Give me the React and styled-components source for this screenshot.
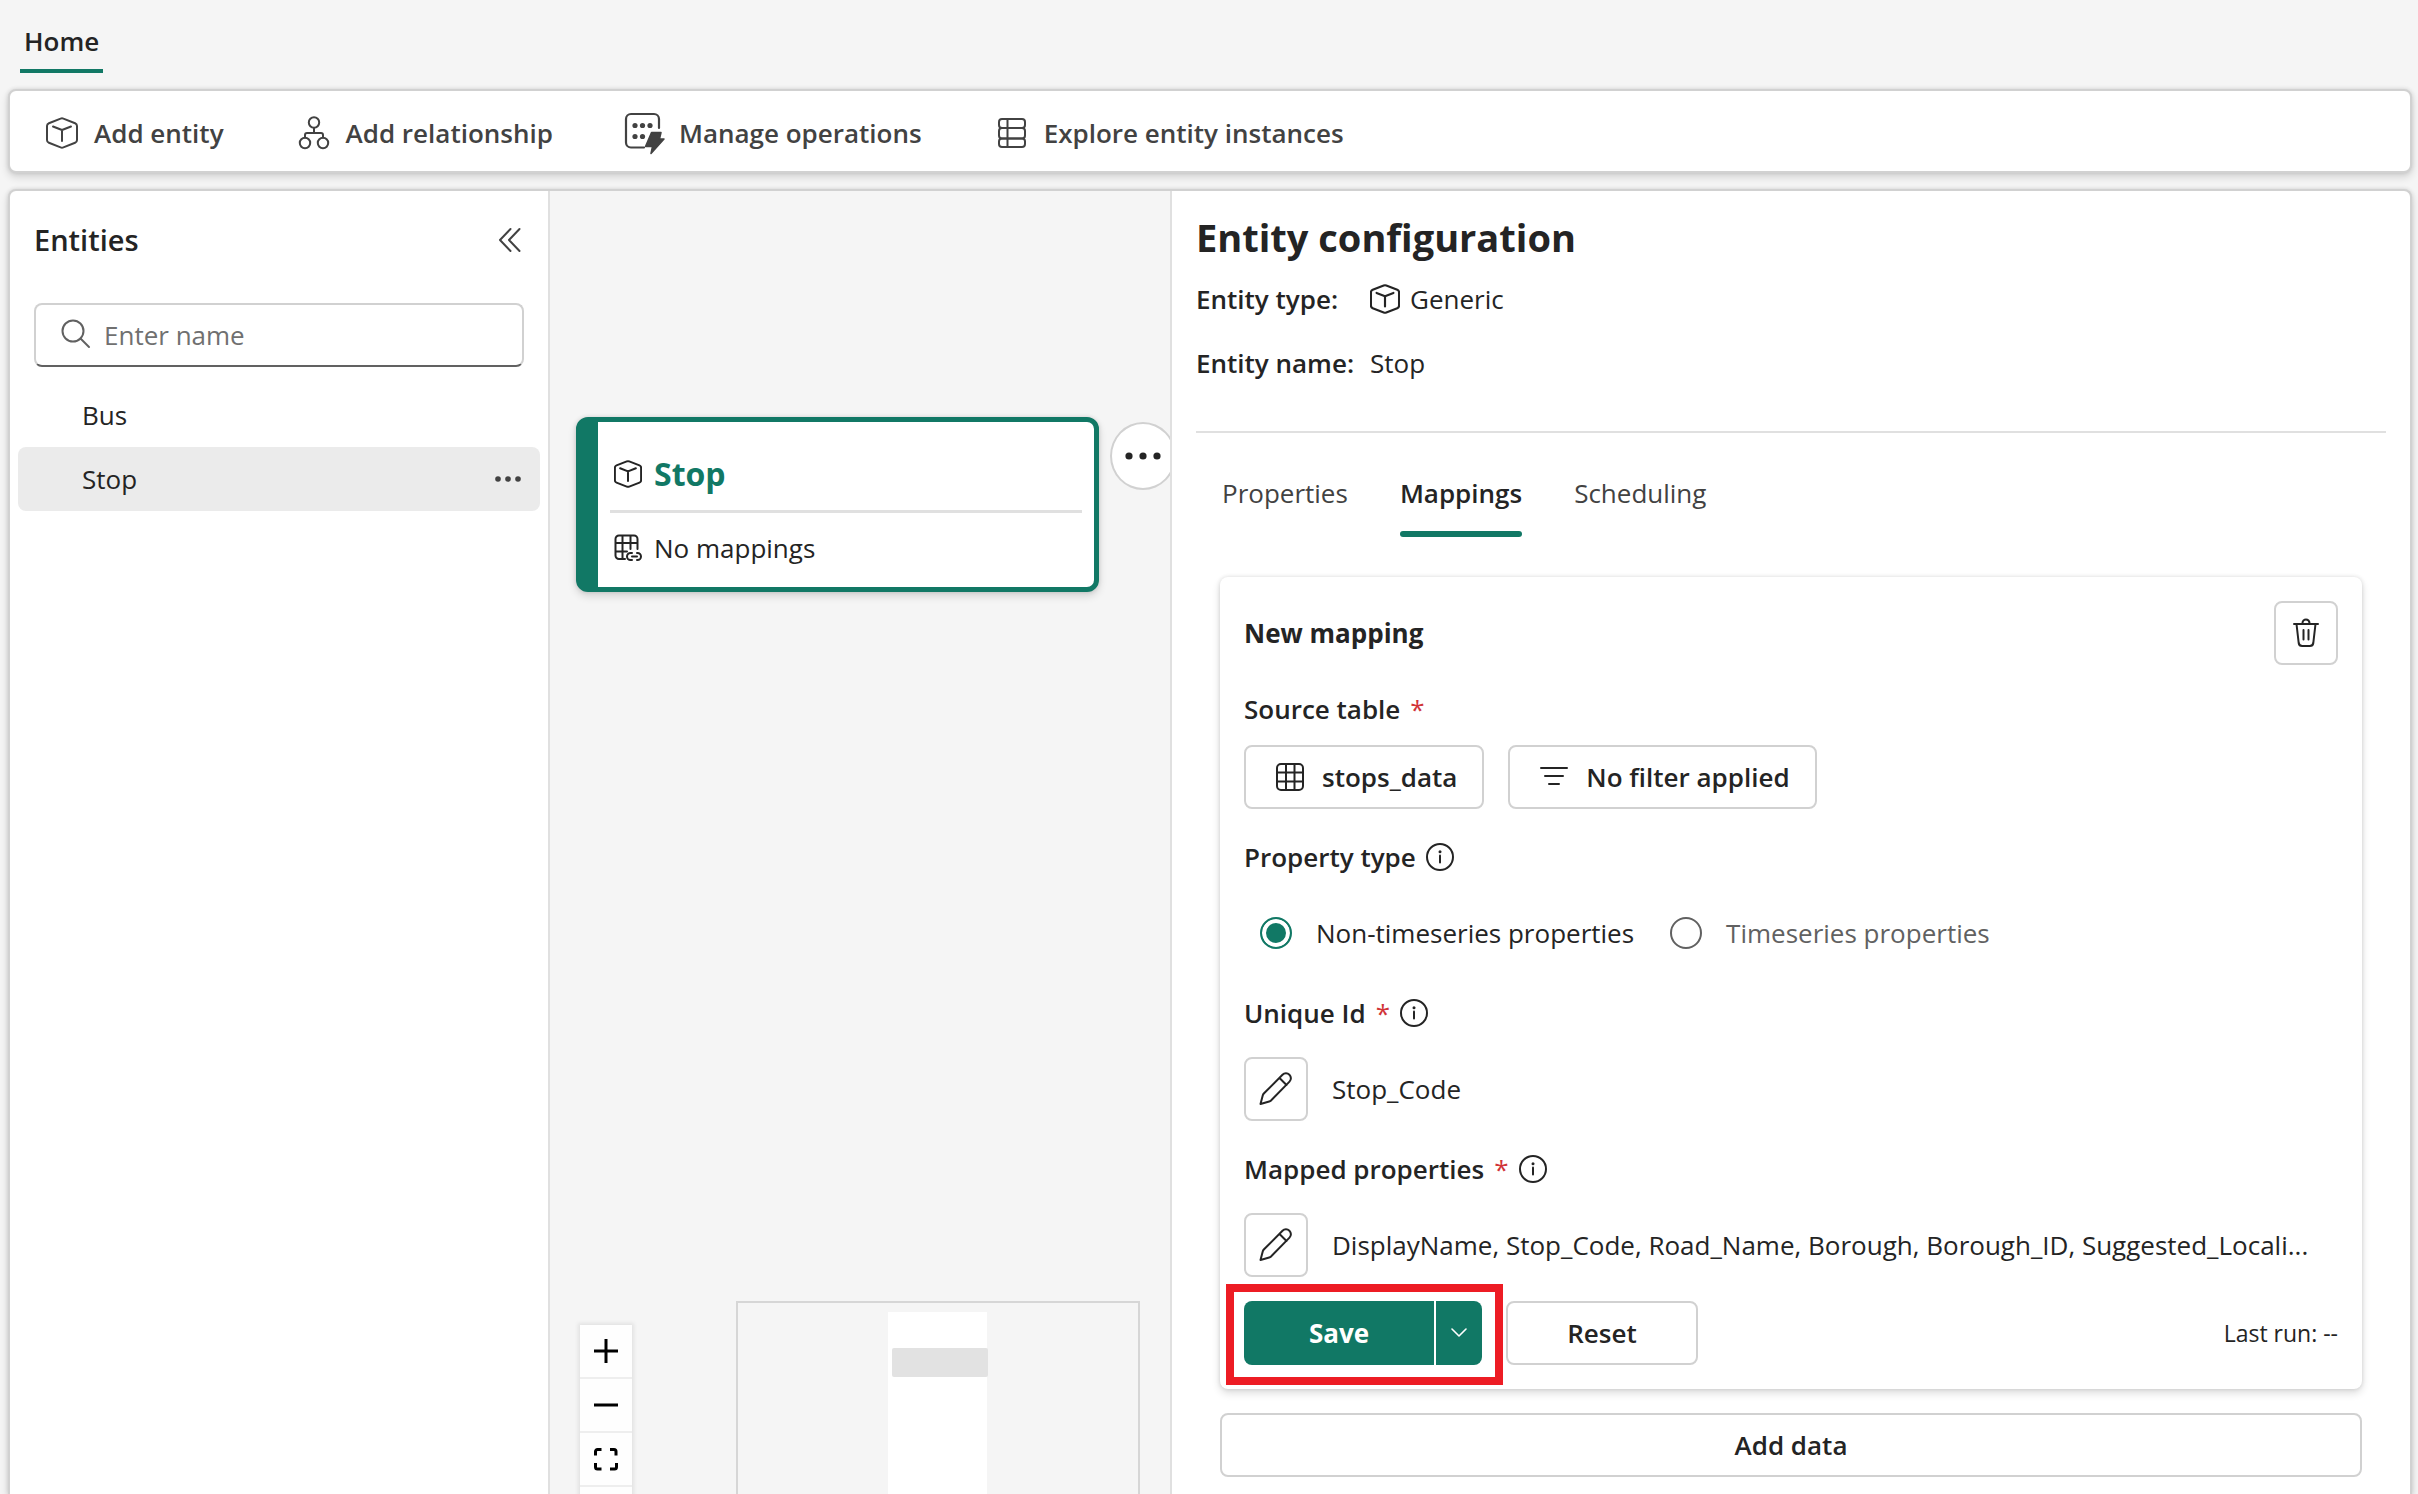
import React, { useState } from "react";
import styled, { createGlobalStyle } from "styled-components";

const GlobalStyle = createGlobalStyle`
  * {
    box-sizing: border-box;
  }

  body {
    margin: 0;
    background-color: #f5f5f5;
    color: #242424;
    font-family: "Open Sans", "Noto Sans", sans-serif;
    font-size: 26px;
    line-height: 40px;
  }

  button,
  input {
    font: inherit;
    color: inherit;
  }
`;

const Page = styled.div`
  height: 100vh;
  display: flex;
  flex-direction: column;
  padding: 0 6px 0 8px;
  overflow: hidden;
`;

const MenuBar = styled.nav`
  display: flex;
  padding: 12px 12px 16px;
`;

const MenuTab = styled.button`
  height: 61px;
  padding: 0 4px;
  border: none;
  background: none;
  font-weight: 600;
  border-bottom: 4px solid #117865;
  cursor: pointer;
`;

const Toolbar = styled.div`
  display: flex;
  align-items: center;
  flex-shrink: 0;
  gap: 70px;
  height: 84px;
  padding: 4px 32px 0;
  margin-bottom: 16px;
  background-color: #fff;
  border: 2px solid #d1d1d1;
  border-radius: 8px;
  box-shadow: 0 4px 8px rgba(0, 0, 0, 0.14), 0 0 4px rgba(0, 0, 0, 0.12);
`;

const ToolbarButton = styled.button`
  display: flex;
  align-items: center;
  gap: 12px;
  padding: 0;
  border: none;
  background: none;
  color: #424242;
  font-weight: 600;
  white-space: nowrap;
  cursor: pointer;
`;

const Workspace = styled.main`
  flex: 1;
  min-height: 0;
  display: grid;
  grid-template-columns: 540px minmax(0, 1fr) minmax(0, 2fr);
  background-color: #fff;
  border: 2px solid #d1d1d1;
  border-bottom: none;
  border-radius: 8px 8px 0 0;
  box-shadow: 0 4px 8px rgba(0, 0, 0, 0.14), 0 0 4px rgba(0, 0, 0, 0.12);
`;

const Sidebar = styled.aside`
  border-right: 2px solid #e0e0e0;
`;

const SidebarHeader = styled.div`
  display: flex;
  justify-content: space-between;
  align-items: center;
  height: 98px;
  padding: 0 24px;
`;

const SidebarTitle = styled.h2`
  margin: 0;
  font-size: 29px;
  font-weight: 600;
`;

const IconButton = styled.button`
  display: flex;
  align-items: center;
  padding: 0;
  border: none;
  background: none;
  color: #424242;
  cursor: pointer;
`;

const SearchBox = styled.label`
  display: flex;
  align-items: center;
  gap: 12px;
  height: 64px;
  margin: 14px 24px 16px;
  padding: 0 24px;
  color: #616161;
  border: 2px solid #d1d1d1;
  border-bottom-color: #616161;
  border-radius: 8px;
`;

const SearchInput = styled.input`
  flex: 1;
  min-width: 0;
  padding: 0;
  border: none;
  outline: none;
  background: none;

  &::placeholder {
    color: #707070;
    opacity: 1;
  }
`;

const EntityList = styled.ul`
  margin: 0;
  padding: 0 8px;
  list-style: none;
`;

const EntityRow = styled.li`
  display: flex;
  align-items: center;
  height: 64px;
  padding-right: 12px;
  border-radius: 8px;
  background-color: ${({ $selected }) => ($selected ? "#ebebeb" : "transparent")};
`;

const EntityButton = styled.button`
  flex: 1;
  height: 100%;
  padding: 0 64px;
  border: none;
  background: none;
  text-align: left;
  cursor: pointer;
`;

const Canvas = styled.section`
  position: relative;
  overflow: hidden;
  background-color: #f5f5f5;
`;

const EntityNode = styled.div`
  position: absolute;
  top: 226px;
  left: 26px;
  width: 523px;
  height: 175px;
  padding: 16px 12px;
  background-color: #fff;
  border: 5px solid #117865;
  border-left-width: 22px;
  border-radius: 12px;
  box-shadow: 0 4px 8px rgba(0, 0, 0, 0.14), 0 0 4px rgba(0, 0, 0, 0.12);
`;

const NodeRow = styled.div`
  display: flex;
  align-items: center;
  gap: 12px;
  height: 72px;
  padding-left: 4px;

  & + & {
    border-top: 3px solid #e0e0e0;
  }
`;

const NodeName = styled.strong`
  color: #117865;
  font-size: 32px;
  font-weight: 700;
`;

const NodeMenuButton = styled.button`
  position: absolute;
  top: 231px;
  left: 560px;
  width: 66px;
  height: 68px;
  display: flex;
  align-items: center;
  justify-content: center;
  padding: 0;
  background-color: #fff;
  border: 2px solid #d1d1d1;
  border-radius: 50%;
  cursor: pointer;
`;

const ZoomControls = styled.div`
  position: absolute;
  left: 30px;
  bottom: -47px;
  width: 52px;
  box-shadow: 0 0 4px 2px rgba(0, 0, 0, 0.08);
`;

const ZoomButton = styled.button`
  display: flex;
  align-items: center;
  justify-content: center;
  width: 52px;
  height: 54px;
  padding: 0;
  color: #000;
  background-color: #fefefe;
  border: none;
  border-bottom: 2px solid #eee;
  cursor: pointer;
`;

const MiniMap = styled.div`
  position: absolute;
  right: 30px;
  bottom: -47px;
  width: 404px;
  height: 240px;
  padding-top: 9px;
  border: 2px solid #d6d6d6;
`;

const MiniMapView = styled.div`
  width: 99px;
  height: 100%;
  margin-left: 150px;
  padding: 36px 0 0 4px;
  background-color: #fff;
`;

const MiniMapNode = styled.div`
  width: 96px;
  height: 29px;
  background-color: #e2e2e2;
  border-radius: 2px;
`;

const ConfigPanel = styled.section`
  padding: 16px 24px 0;
  border-left: 2px solid #e0e0e0;
  overflow: hidden;
`;

const ConfigTitle = styled.h1`
  margin: 0;
  font-size: 38px;
  font-weight: 700;
  line-height: 60px;
`;

const Details = styled.dl`
  display: grid;
  grid-template-columns: 174px 1fr;
  grid-auto-rows: 64px;
  align-items: center;
  margin: 0;
  padding-bottom: 36px;
  border-bottom: 2px solid #e0e0e0;
`;

const DetailLabel = styled.dt`
  font-weight: 600;
`;

const DetailValue = styled.dd`
  display: flex;
  align-items: center;
  gap: 10px;
  margin: 0;
`;

const TabList = styled.div`
  display: flex;
  gap: 52px;
  padding: 20px 26px 40px;
`;

const Tab = styled.button`
  position: relative;
  height: 84px;
  padding: 0 0 4px;
  border: none;
  background: none;
  color: ${({ $active }) => ($active ? "#242424" : "#424242")};
  font-weight: ${({ $active }) => ($active ? 600 : 400)};
  cursor: pointer;

  &::after {
    content: "";
    position: absolute;
    left: 0;
    right: 0;
    bottom: 0;
    height: 6px;
    border-radius: 3px;
    background-color: ${({ $active }) => ($active ? "#117865" : "transparent")};
  }
`;

const MappingSection = styled.div`
  display: flex;
  flex-direction: column;
  gap: 24px;
  padding: 0 24px;
`;

const MappingCard = styled.form`
  padding: 24px;
  background-color: #fff;
  border-radius: 8px;
  box-shadow: 0 4px 8px rgba(0, 0, 0, 0.14), 0 0 4px rgba(0, 0, 0, 0.12);
`;

const CardHeader = styled.div`
  display: flex;
  align-items: center;
  justify-content: space-between;
  margin-bottom: 24px;
`;

const CardTitle = styled.h3`
  margin: 0;
  font-size: 26px;
  font-weight: 700;
`;

const Field = styled.fieldset`
  min-width: 0;
  margin: 0 0 28px;
  padding: 0;
  border: none;

  &:last-of-type {
    margin-bottom: 24px;
  }
`;

const FieldLabel = styled.legend`
  display: flex;
  align-items: center;
  gap: 10px;
  height: 40px;
  padding: 0;
  margin-bottom: ${({ $tight }) => ($tight ? "16px" : "24px")};
  font-weight: 600;
`;

const Required = styled.span`
  color: #d13438;
  font-weight: 400;
`;

const FieldRow = styled.div`
  display: flex;
  align-items: center;
  gap: 24px;
  height: 64px;
`;

const OutlineButton = styled.button`
  display: flex;
  align-items: center;
  justify-content: center;
  gap: 18px;
  height: 64px;
  min-width: ${({ $wide }) => ($wide ? "192px" : "64px")};
  padding: ${({ $square, $icon }) => ($square ? "0" : $icon ? "0 25px 0 30px" : "0 24px")};
  background-color: #fff;
  border: 2px solid #d1d1d1;
  border-radius: 8px;
  font-weight: 600;
  white-space: nowrap;
  cursor: pointer;
`;

const PropertyText = styled.span`
  min-width: 0;
  overflow: hidden;
  white-space: nowrap;
`;

const RadioRow = styled(FieldRow)`
  gap: 36px;
  padding-left: 16px;
`;

const RadioLabel = styled.label`
  display: flex;
  align-items: center;
  gap: 24px;
  color: ${({ $muted }) => ($muted ? "#616161" : "#242424")};
`;

const Radio = styled.input`
  appearance: none;
  width: 32px;
  height: 32px;
  margin: 0;
  border: 2px solid #616161;
  border-radius: 50%;

  &:checked {
    border-color: #117865;
    background-color: #117865;
    box-shadow: inset 0 0 0 4px #fff;
  }
`;

const Actions = styled.div`
  display: flex;
  align-items: center;
  gap: 24px;
`;

const SplitButton = styled.div`
  position: relative;
  display: flex;
  height: 64px;
`;

const SaveButton = styled.button`
  width: 192px;
  padding: 0;
  border: none;
  border-right: 2px solid #fff;
  border-radius: 8px 0 0 8px;
  background-color: #117865;
  color: #fff;
  font-weight: 700;
  cursor: pointer;
`;

const SaveMenuButton = styled.button`
  display: flex;
  align-items: center;
  justify-content: center;
  width: 46px;
  padding: 0;
  border: none;
  border-radius: 0 8px 8px 0;
  background-color: #117865;
  color: #fff;
  cursor: pointer;
`;

const Highlight = styled.div`
  position: absolute;
  inset: -17px -21px -20px -18px;
  border: 8px solid #ed1c24;
  pointer-events: none;
`;

const LastRun = styled.span`
  margin-left: auto;
  font-size: 23px;
`;

const IconSvg = styled.svg`
  flex-shrink: 0;
  fill: none;
  stroke: currentColor;
  stroke-linecap: round;
  stroke-linejoin: round;
`;

const Svg = ({ w, h, width = 2, children }) => (
  <IconSvg width={w} height={h} viewBox={`0 0 ${w} ${h}`} strokeWidth={width} aria-hidden="true">
    {children}
  </IconSvg>
);

const CubeIcon = ({ size = 32, viewBox = "0 0 32 32" }) => (
  <IconSvg
    width={size}
    height={size}
    viewBox={viewBox}
    strokeWidth={size < 32 ? 2.3 : 2}
    aria-hidden="true"
  >
    <path d="M14.6 1.6a4 4 0 0 1 2.8 0l11.7 4.6A3 3 0 0 1 31 9v14a3 3 0 0 1-1.9 2.8l-11.7 4.6a4 4 0 0 1-2.8 0L2.9 25.8A3 3 0 0 1 1 23V9a3 3 0 0 1 1.9-2.8z" />
    <path d="M7 9.5 16 13l9-3.5M16 13v11" />
  </IconSvg>
);

const RelationIcon = () => (
  <Svg w={40} h={40}>
    <circle cx="20" cy="9.5" r="5.2" />
    <circle cx="11" cy="30" r="5.2" />
    <circle cx="29" cy="30" r="5.2" />
    <path d="M20 15v5M11 24.5V22a2 2 0 0 1 2-2h14a2 2 0 0 1 2 2v2.5" />
  </Svg>
);

const OperationsIcon = () => (
  <Svg w={44} h={44} width={2.2}>
    <path d="M21 36.5H8a5 5 0 0 1-5-5V8a5 5 0 0 1 5-5h23a5 5 0 0 1 5 5v9" />
    <g fill="currentColor" stroke="none">
      <circle cx="12" cy="14.5" r="2.6" />
      <circle cx="19.5" cy="14.5" r="2.6" />
      <circle cx="27" cy="14.5" r="2.6" />
      <circle cx="12" cy="25.5" r="2.6" />
      <circle cx="19.5" cy="25.5" r="2.6" />
    </g>
    <path
      d="M28.5 21.5h9.500l-1.500 6.500h4.500L28 42.500l1.500-7h-7z"
      fill="currentColor"
      strokeWidth="1.500"
    />
  </Svg>
);

const InstancesIcon = () => (
  <Svg w={40} h={40}>
    <rect x="7" y="6" width="26" height="9" rx="3" />
    <rect x="7" y="15" width="26" height="10.5" rx="3" />
    <rect x="7" y="25.5" width="26" height="8.500" rx="3" />
    <path d="M15.500 6v28" />
  </Svg>
);

const GridIcon = () => (
  <Svg w={28} h={28}>
    <rect x="1" y="1" width="26" height="26" rx="4" />
    <path d="M10 1v26M18.5 1v26M1 9.5h26M1 18.5h26" />
  </Svg>
);

const GridLinkIcon = () => (
  <Svg w={28} h={28}>
    <path d="M11 25H5a3.5 3.5 0 0 1-3.500-3.500V5A3.500 3.500 0 0 1 5 1.500h15A3.500 3.500 0 0 1 23.500 5v10M8.500 1.500V25M16.500 1.500V15M1.500 9h22M1.500 17.500H13" />
    <path d="M18 19h-1.500a3.500 3.500 0 0 0 0 7H18M23 19h.5a3.500 3.500 0 0 1 0 7H23M18 22.500h5" />
  </Svg>
);

const FilterIcon = () => (
  <Svg w={28} h={28}>
    <path d="M1 5h26M5 13h18M9 21h10" />
  </Svg>
);

const InfoIcon = () => (
  <Svg w={28} h={28}>
    <circle cx="14" cy="14" r="13" />
    <path d="M14 12.5v7" />
    <circle cx="14" cy="8.8" r="1.5" fill="currentColor" stroke="none" />
  </Svg>
);

const PencilIcon = () => (
  <Svg w={34} h={34}>
    <path d="M23.5 2.8a4.600 4.600 0 0 1 7 6.800L12 28.500a4 4 0 0 1-1.800 1L1.500 32l2.300-8.700a4 4 0 0 1 1-1.800zM20.500 6l7 7" />
  </Svg>
);

const TrashIcon = () => (
  <Svg w={28} h={30}>
    <path d="M2 6h24M10.500 6V5a3.500 3.500 0 0 1 7 0v1M4.500 6l2.200 19a3.500 3.500 0 0 0 3.500 3h7.600a3.500 3.500 0 0 0 3.500-3l2.200-19M11.500 12v9.500M16.500 12v9.500" />
  </Svg>
);

const SearchIcon = () => (
  <Svg w={32} h={32}>
    <circle cx="13" cy="12" r="10.5" />
    <path d="M20.5 19.5 29 28" />
  </Svg>
);

const CollapseIcon = () => (
  <Svg w={26} h={26}>
    <path d="M12.5 2 2 13l10.500 11M21.500 2 11 13l10.500 11" />
  </Svg>
);

const ChevronIcon = () => (
  <Svg w={16} h={10} width={1.6}>
    <path d="M1 1l7 7 7-7" />
  </Svg>
);

const DotsIcon = ({ r = 2.6, gap = 10 }) => (
  <svg width={gap * 4} height={12} fill="currentColor" aria-hidden="true">
    <circle cx={gap} cy="6" r={r} />
    <circle cx={gap * 2} cy="6" r={r} />
    <circle cx={gap * 3} cy="6" r={r} />
  </svg>
);

const PlusIcon = () => (
  <svg width="24" height="24" viewBox="0 0 24 24" stroke="currentColor" strokeWidth="3">
    <path d="M0 12h24M12 0v24" />
  </svg>
);

const MinusIcon = () => (
  <svg width="24" height="24" viewBox="0 0 24 24" stroke="currentColor" strokeWidth="3">
    <path d="M0 12h24" />
  </svg>
);

const FitIcon = () => (
  <svg width="24" height="24" viewBox="0 0 24 24" fill="none" stroke="currentColor" strokeWidth="3">
    <path d="M1.5 8.5v-4a2 2 0 0 1 2-2h4M16 2.5h4a2 2 0 0 1 2 2v4M22.500 16v4a2 2 0 0 1-2 2h-4.500M7.500 22h-4a2 2 0 0 1-2-2v-4" />
  </svg>
);

const tools = [
  { title: "Add entity", icon: <CubeIcon size={40} viewBox="-4 -4 40 40" /> },
  { title: "Add relationship", icon: <RelationIcon /> },
  { title: "Manage operations", icon: <OperationsIcon /> },
  { title: "Explore entity instances", icon: <InstancesIcon /> },
];

const entities = ["Bus", "Stop"];
const tabs = ["Properties", "Mappings", "Scheduling"];

const App = () => {
  const [selected, setSelected] = useState("Stop");
  const [activeTab, setActiveTab] = useState("Mappings");
  const [propertyType, setPropertyType] = useState("static");

  return (
    <Page>
      <GlobalStyle />
      <MenuBar>
        <MenuTab>Home</MenuTab>
      </MenuBar>
      <Toolbar>
        {tools.map((tool) => (
          <ToolbarButton key={tool.title}>
            {tool.icon}
            {tool.title}
          </ToolbarButton>
        ))}
      </Toolbar>
      <Workspace>
        <Sidebar>
          <SidebarHeader>
            <SidebarTitle>Entities</SidebarTitle>
            <IconButton aria-label="Collapse">
              <CollapseIcon />
            </IconButton>
          </SidebarHeader>
          <SearchBox>
            <SearchIcon />
            <SearchInput type="text" placeholder="Enter name" aria-label="Enter name" />
          </SearchBox>
          <EntityList>
            {entities.map((name) => (
              <EntityRow key={name} $selected={name === selected}>
                <EntityButton onClick={() => setSelected(name)}>{name}</EntityButton>
                {name === selected && (
                  <IconButton aria-label="More options">
                    <DotsIcon r={2.8} gap={10} />
                  </IconButton>
                )}
              </EntityRow>
            ))}
          </EntityList>
        </Sidebar>

        <Canvas>
          <EntityNode>
            <NodeRow>
              <CubeIcon size={28} />
              <NodeName>Stop</NodeName>
            </NodeRow>
            <NodeRow>
              <GridLinkIcon />
              No mappings
            </NodeRow>
          </EntityNode>
          <NodeMenuButton aria-label="Entity options">
            <DotsIcon r={3.6} gap={14} />
          </NodeMenuButton>
          <ZoomControls>
            <ZoomButton aria-label="Zoom in">
              <PlusIcon />
            </ZoomButton>
            <ZoomButton aria-label="Zoom out">
              <MinusIcon />
            </ZoomButton>
            <ZoomButton aria-label="Fit view">
              <FitIcon />
            </ZoomButton>
            <ZoomButton aria-label="Lock" />
          </ZoomControls>
          <MiniMap>
            <MiniMapView>
              <MiniMapNode />
            </MiniMapView>
          </MiniMap>
        </Canvas>

        <ConfigPanel>
          <ConfigTitle>Entity configuration</ConfigTitle>
          <Details>
            <DetailLabel>Entity type:</DetailLabel>
            <DetailValue>
              <CubeIcon size={30} />
              Generic
            </DetailValue>
            <DetailLabel>Entity name:</DetailLabel>
            <DetailValue>Stop</DetailValue>
          </Details>
          <TabList role="tablist">
            {tabs.map((tab) => (
              <Tab
                key={tab}
                role="tab"
                aria-selected={tab === activeTab}
                $active={tab === activeTab}
                onClick={() => setActiveTab(tab)}
              >
                {tab}
              </Tab>
            ))}
          </TabList>
          <MappingSection>
            <MappingCard onSubmit={(e) => e.preventDefault()}>
              <CardHeader>
                <CardTitle>New mapping</CardTitle>
                <OutlineButton type="button" $square aria-label="Delete mapping">
                  <TrashIcon />
                </OutlineButton>
              </CardHeader>
              <Field>
                <FieldLabel $tight>
                  Source table <Required>*</Required>
                </FieldLabel>
                <FieldRow>
                  <OutlineButton type="button" $icon>
                    <GridIcon />
                    stops_data
                  </OutlineButton>
                  <OutlineButton type="button" $icon>
                    <FilterIcon />
                    No filter applied
                  </OutlineButton>
                </FieldRow>
              </Field>
              <Field>
                <FieldLabel>
                  Property type <InfoIcon />
                </FieldLabel>
                <RadioRow>
                  <RadioLabel>
                    <Radio
                      type="radio"
                      name="propertyType"
                      checked={propertyType === "static"}
                      onChange={() => setPropertyType("static")}
                    />
                    Non-timeseries properties
                  </RadioLabel>
                  <RadioLabel $muted>
                    <Radio
                      type="radio"
                      name="propertyType"
                      checked={propertyType === "timeseries"}
                      onChange={() => setPropertyType("timeseries")}
                    />
                    Timeseries properties
                  </RadioLabel>
                </RadioRow>
              </Field>
              <Field>
                <FieldLabel>
                  Unique Id <Required>*</Required> <InfoIcon />
                </FieldLabel>
                <FieldRow>
                  <OutlineButton type="button" $square aria-label="Edit unique id">
                    <PencilIcon />
                  </OutlineButton>
                  <PropertyText>Stop_Code</PropertyText>
                </FieldRow>
              </Field>
              <Field>
                <FieldLabel>
                  Mapped properties <Required>*</Required> <InfoIcon />
                </FieldLabel>
                <FieldRow>
                  <OutlineButton type="button" $square aria-label="Edit mapped properties">
                    <PencilIcon />
                  </OutlineButton>
                  <PropertyText>
                    DisplayName, Stop_Code, Road_Name, Borough, Borough_ID, Suggested_Locali...
                  </PropertyText>
                </FieldRow>
              </Field>
              <Actions>
                <SplitButton>
                  <SaveButton type="submit">Save</SaveButton>
                  <SaveMenuButton type="button" aria-label="More save options">
                    <ChevronIcon />
                  </SaveMenuButton>
                  <Highlight />
                </SplitButton>
                <OutlineButton type="button" $wide>
                  Reset
                </OutlineButton>
                <LastRun>Last run: --</LastRun>
              </Actions>
            </MappingCard>
            <OutlineButton type="button">Add data</OutlineButton>
          </MappingSection>
        </ConfigPanel>
      </Workspace>
    </Page>
  );
};

export default App;
